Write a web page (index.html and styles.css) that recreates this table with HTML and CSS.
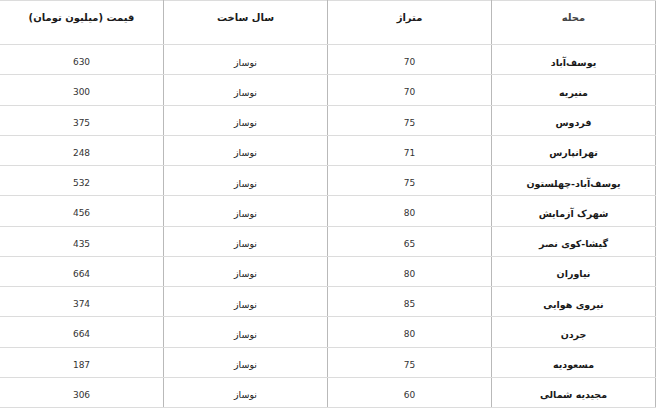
FILE: index.html
```html
<!DOCTYPE html>
<html lang="fa" dir="rtl">
<head>
<meta charset="utf-8">
<title>جدول قیمت</title>
<link rel="stylesheet" href="styles.css">
</head>
<body>
<table class="prices">
  <thead>
    <tr>
      <th class="c-name">محله</th>
      <th>متراژ</th>
      <th>سال ساخت</th>
      <th>قیمت (میلیون تومان)</th>
    </tr>
  </thead>
  <tbody>
    <tr><td class="c-name">یوسف‌آباد</td><td class="num">70</td><td class="year">نوساز</td><td class="num">630</td></tr>
    <tr><td class="c-name">منیریه</td><td class="num">70</td><td class="year">نوساز</td><td class="num">300</td></tr>
    <tr><td class="c-name">فردوس</td><td class="num">75</td><td class="year">نوساز</td><td class="num">375</td></tr>
    <tr><td class="c-name">تهرانپارس</td><td class="num">71</td><td class="year">نوساز</td><td class="num">248</td></tr>
    <tr><td class="c-name">یوسف‌آباد-چهلستون</td><td class="num">75</td><td class="year">نوساز</td><td class="num">532</td></tr>
    <tr><td class="c-name">شهرک آزمایش</td><td class="num">80</td><td class="year">نوساز</td><td class="num">456</td></tr>
    <tr><td class="c-name">گیشا-کوی نصر</td><td class="num">65</td><td class="year">نوساز</td><td class="num">435</td></tr>
    <tr><td class="c-name">نیاوران</td><td class="num">80</td><td class="year">نوساز</td><td class="num">664</td></tr>
    <tr><td class="c-name">نیروی هوایی</td><td class="num">85</td><td class="year">نوساز</td><td class="num">374</td></tr>
    <tr><td class="c-name">جردن</td><td class="num">80</td><td class="year">نوساز</td><td class="num">664</td></tr>
    <tr><td class="c-name">مسعودیه</td><td class="num">75</td><td class="year">نوساز</td><td class="num">187</td></tr>
    <tr><td class="c-name">مجیدیه شمالی</td><td class="num">60</td><td class="year">نوساز</td><td class="num">306</td></tr>
  </tbody>
</table>
</body>
</html>
```
FILE: styles.css
```css
html, body {
  margin: 0;
  padding: 0;
  background: #ffffff;
}

body {
  font-family: "DejaVu Sans", "Noto Sans", sans-serif;
  color: #222222;
}

.prices {
  width: 656px;
  border-collapse: collapse;
  table-layout: fixed;
  direction: rtl;
}

.prices th,
.prices td {
  width: 164px;
  text-align: center;
  border-left: 1px solid #b9b9b9;
  border-right: 1px solid #b9b9b9;
  border-top: 1px solid #dcdcdc;
  border-bottom: 1px solid #dcdcdc;
  padding: 0;
  box-sizing: border-box;
}

.prices th {
  height: 44px;
  font-size: 10px;
  font-weight: bold;
  vertical-align: top;
  padding-top: 11px;
  color: #1a1a1a;
}

.prices th.c-name {
  color: #444;
}

.prices td {
  height: 30.25px;
  font-size: 9.5px;
  vertical-align: middle;
  padding-top: 5px;
}

.prices td.c-name {
  font-weight: bold;
  color: #1a1a1a;
}

.prices td.year {
  font-size: 9.5px;
  color: #222;
}

.prices td.num {
  font-size: 9px;
  color: #333;
}
```
